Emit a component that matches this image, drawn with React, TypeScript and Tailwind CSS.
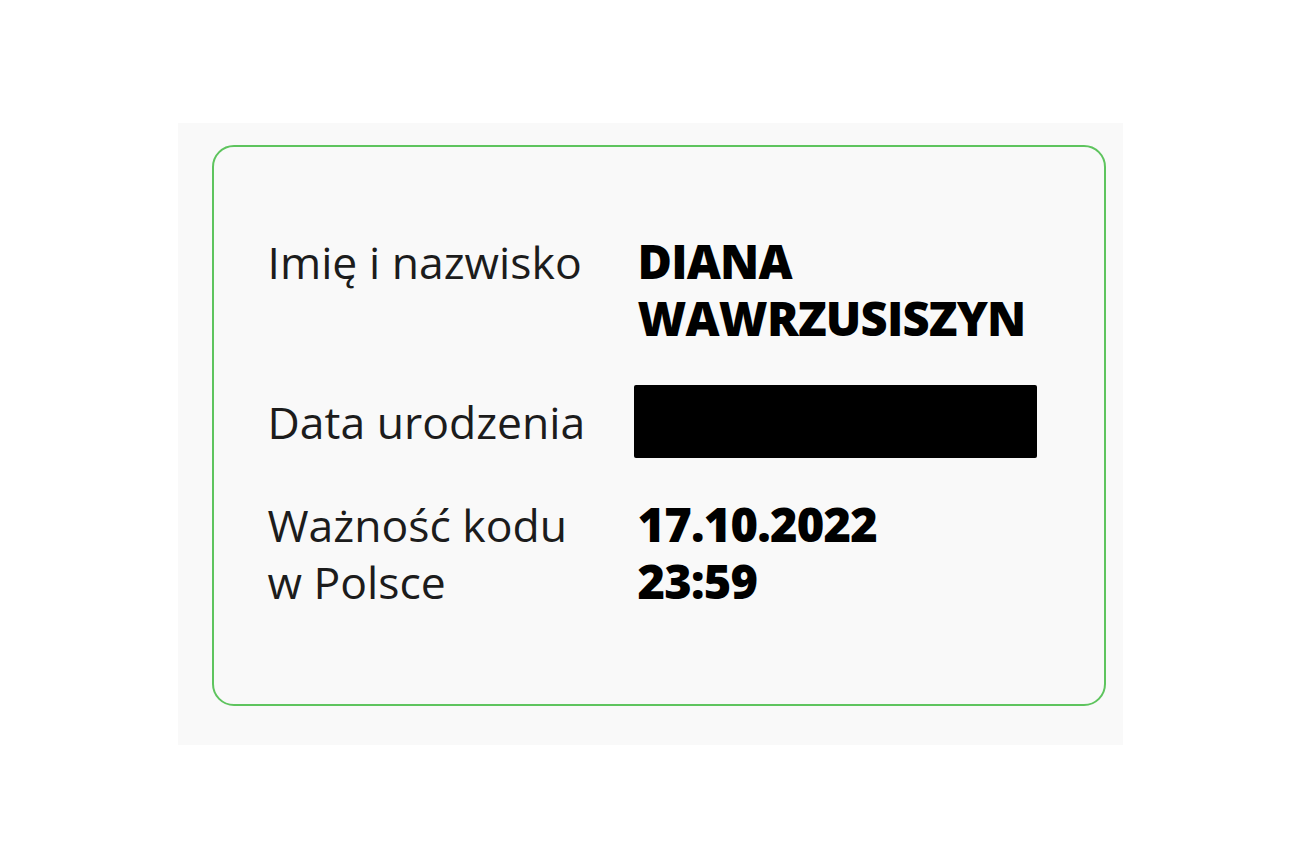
export default function App() {
  return (
    <div className="min-h-screen w-full bg-white flex items-center justify-center font-['Open_Sans',sans-serif]">
      <div className="w-[945px] h-[622px] bg-[#f9f9f9] pl-[34px] pt-[22px]">
        <div className="w-[894px] h-[561px] border-2 border-[#5ec45e] rounded-[22px] pl-[54px] pt-[86px]">
          <div className="grid grid-cols-[366px_1fr] gap-y-[38px] items-center text-[44.5px] leading-[57px]">
            <div className="self-start text-[#1c1c1c]">Imię i nazwisko</div>
            <div className="pl-1 font-extrabold text-[47px] tracking-[-0.8px] text-black">
              DIANA
              <br />
              WAWRZUSISZYN
            </div>

            <div className="text-[#1c1c1c]">Data urodzenia</div>
            <div className="w-[403px] h-[73px] bg-black rounded-[2px]" />

            <div className="self-start text-[#1c1c1c]">
              Ważność kodu
              <br />
              w Polsce
            </div>
            <div className="self-start pl-1 font-extrabold text-[47px] tracking-[-0.8px] text-black">
              17.10.2022
              <br />
              23:59
            </div>
          </div>
        </div>
      </div>
    </div>
  );
}
